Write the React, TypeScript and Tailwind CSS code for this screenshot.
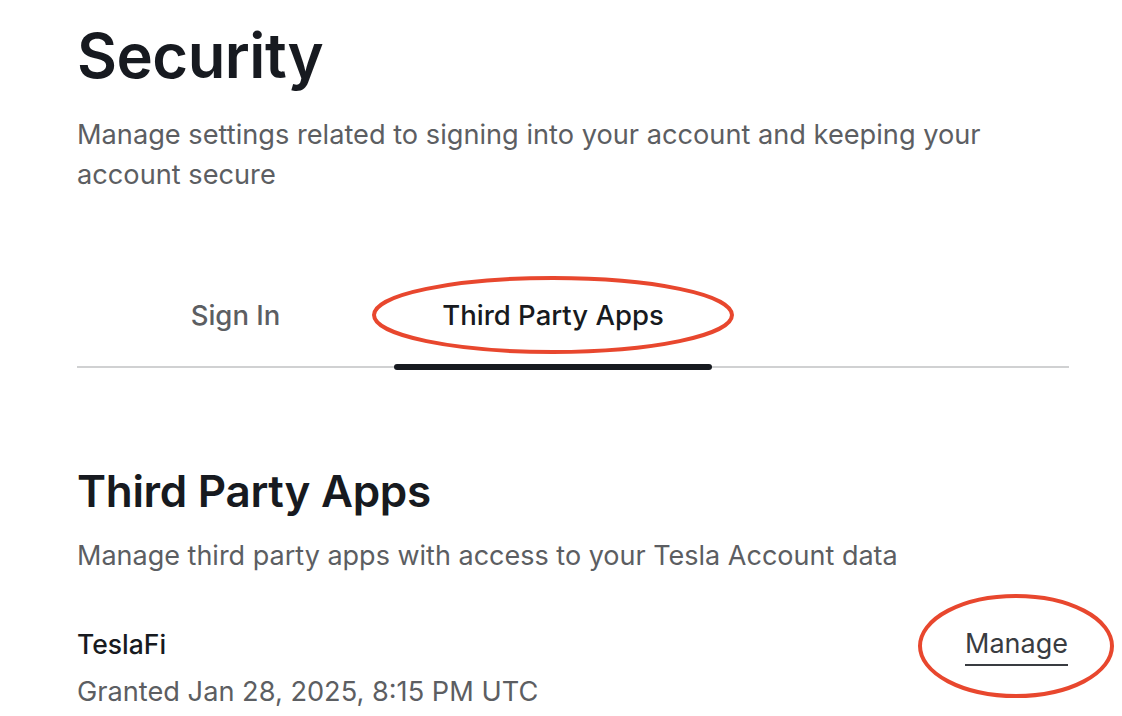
import React from "react";

export default function App() {
  return (
    <div
      className="w-[1122px] h-[716px] overflow-hidden bg-white relative"
      style={{ fontFamily: "Inter, 'Noto Sans', sans-serif" }}
    >
      <div className="pl-[77px] pr-[53px] pt-[16px]">
        <h1 className="text-[61.5px] leading-[80px] font-semibold text-[#171a20] tracking-[-0.5px]">Security</h1>
        <p className="mt-[19px] text-[27.2px] leading-[40px] text-[#5c5e62] w-[940px]">
          Manage settings related to signing into your account and keeping your account secure
        </p>

        <div className="mt-[100px] relative border-b-2 border-[#d0d1d2] flex">
          <div className="w-[317px] h-[71px] flex items-start justify-center text-[27.5px] leading-[40px] font-medium text-[#5c5e62]">Sign In</div>
          <div className="w-[318px] h-[71px] flex items-start justify-center text-[27.5px] leading-[40px] font-medium text-[#171a20] relative">
            Third Party Apps
            <div className="absolute left-0 right-0 bottom-[-4px] h-[6px] rounded-full bg-[#171a20]" />
          </div>
        </div>

        <h2 className="mt-[95px] text-[44px] leading-[56px] font-semibold text-[#171a20] tracking-[-0.3px]">Third Party Apps</h2>
        <p className="mt-[17px] text-[27px] leading-[40px] text-[#5c5e62]">
          Manage third party apps with access to your Tesla Account data
        </p>

        <div className="mt-[48px] flex justify-between items-start">
          <div>
            <div className="text-[26.5px] leading-[40px] font-medium text-[#171a20]">TeslaFi</div>
            <div className="mt-[8px] text-[27.2px] leading-[40px] text-[#5c5e62]">Granted Jan 28, 2025, 8:15 PM UTC</div>
          </div>
          <div className="text-[27px] leading-[40px] text-[#393c41] border-b-2 border-[#393c41] mr-[1px]">Manage</div>
        </div>
      </div>

      <svg className="absolute left-[371px] top-[275px]" width="364" height="80" viewBox="0 0 364 80">
        <ellipse cx="182" cy="40" rx="179" ry="37" fill="none" stroke="#e8472e" strokeWidth="4" />
      </svg>
      <svg className="absolute left-[917px] top-[593px]" width="200" height="106" viewBox="0 0 200 106">
        <ellipse cx="99" cy="53" rx="96" ry="50" fill="none" stroke="#e8472e" strokeWidth="4" />
      </svg>
    </div>
  );
}
